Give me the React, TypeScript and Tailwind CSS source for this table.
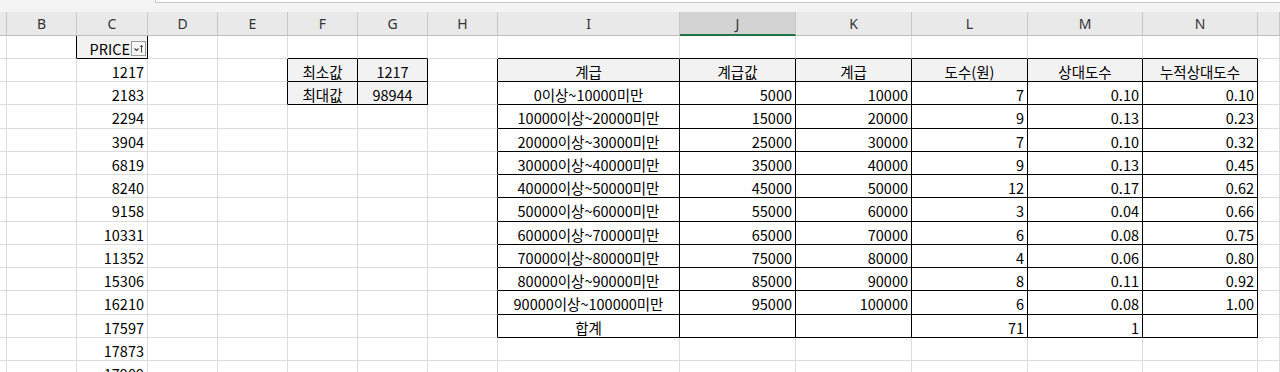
import React from 'react';

const letters = ['', 'B', 'C', 'D', 'E', 'F', 'G', 'H', 'I', 'J', 'K', 'L', 'M', 'N', ''];
const rowH = [23, 23, 23, 24, 23, 23, 23, 24, 23, 23, 23, 24, 23, 23, 23];

const priceCol: (number | string)[] = ['PRICE', 1217, 2183, 2294, 3904, 6819, 8240, 9158, 10331, 11352, 15306, 16210, 17597, 17873, 17909];

const mainTable: string[][] = [
  ['계급', '계급값', '계급', '도수(원)', '상대도수', '누적상대도수'],
  ['0이상~10000미만', '5000', '10000', '7', '0.10', '0.10'],
  ['10000이상~20000미만', '15000', '20000', '9', '0.13', '0.23'],
  ['20000이상~30000미만', '25000', '30000', '7', '0.10', '0.32'],
  ['30000이상~40000미만', '35000', '40000', '9', '0.13', '0.45'],
  ['40000이상~50000미만', '45000', '50000', '12', '0.17', '0.62'],
  ['50000이상~60000미만', '55000', '60000', '3', '0.04', '0.66'],
  ['60000이상~70000미만', '65000', '70000', '6', '0.08', '0.75'],
  ['70000이상~80000미만', '75000', '80000', '4', '0.06', '0.80'],
  ['80000이상~90000미만', '85000', '90000', '8', '0.11', '0.92'],
  ['90000이상~100000미만', '95000', '100000', '6', '0.08', '1.00'],
  ['합계', '', '', '71', '1', ''],
];

const inTable = (r: number, c: number) =>
  (r === 1 && c === 2) ||
  (r >= 2 && r <= 3 && c >= 5 && c <= 6) ||
  (r >= 2 && r <= 13 && c >= 8 && c <= 13);

type Align = 'left' | 'right' | 'center';
type CellInfo = { text: string; align: Align; fill: boolean; filter?: boolean };

function getCell(r: number, c: number): CellInfo {
  if (c === 2) {
    if (r === 1) return { text: 'PRICE', align: 'right', fill: true, filter: true };
    return { text: String(priceCol[r - 1] ?? ''), align: 'right', fill: false };
  }
  if (c === 5 && r === 2) return { text: '최소값', align: 'center', fill: true };
  if (c === 5 && r === 3) return { text: '최대값', align: 'center', fill: true };
  if (c === 6 && r === 2) return { text: '1217', align: 'center', fill: true };
  if (c === 6 && r === 3) return { text: '98944', align: 'center', fill: true };
  if (c >= 8 && c <= 13 && r >= 2 && r <= 13) {
    const row = mainTable[r - 2];
    const text = row[c - 8];
    if (r === 2) return { text, align: 'center', fill: true };
    if (c === 8) return { text, align: 'center', fill: false };
    return { text, align: 'right', fill: false };
  }
  return { text: '', align: 'left', fill: false };
}

function FilterButton() {
  return (
    <div className="w-[15px] h-[15px] border border-[#9a9a9a] bg-[#f7f7f7] flex items-center justify-center shrink-0 mt-[2px]">
      <svg width="13" height="13" viewBox="0 0 13 13">
        <path d="M2.5 6.5 L4.5 8.5 L6.5 6.5" fill="none" stroke="#444" strokeWidth="1.1" />
        <path d="M9.5 10.5 V3.5 M8.2 4.8 L9.5 3.3 L10.8 4.8" fill="none" stroke="#444" strokeWidth="1" />
      </svg>
    </div>
  );
}

export default function App() {
  const cells: React.ReactNode[] = [];

  letters.forEach((l, c) => {
    const selected = c === 9;
    cells.push(
      <div
        key={`h-${c}`}
        className={`h-[24px] flex items-center justify-center border-r border-r-[#c8c8c8] ${
          selected ? 'bg-[#d3d3d3] border-b-2 border-b-[#217346]' : 'bg-[#e9e9e9] border-b border-b-[#bdbdbd]'
        } text-[14px] text-[#333] font-['Noto_Sans',sans-serif]`}
      >
        {l}
      </div>
    );
  });

  for (let r = 1; r <= 15; r++) {
    for (let c = 0; c < 15; c++) {
      const info = getCell(r, c);
      const rb = inTable(r, c) || inTable(r, c + 1);
      const bb = inTable(r, c) || inTable(r + 1, c);
      const h = rowH[r - 1] === 24 ? 'h-[24px]' : 'h-[23px]';
      const alignCls =
        info.align === 'right'
          ? info.filter
            ? 'justify-end pr-[1px] gap-[1px]'
            : 'justify-end pr-[3px]'
          : info.align === 'center'
          ? 'justify-center'
          : 'justify-start pl-[3px]';
      cells.push(
        <div
          key={`${r}-${c}`}
          className={`${h} flex items-center overflow-hidden whitespace-nowrap border-r border-b ${
            rb ? 'border-r-black' : 'border-r-[#dcdcdc]'
          } ${bb ? 'border-b-black' : 'border-b-[#dcdcdc]'} ${info.fill ? 'bg-[#f2f2f2]' : 'bg-white'} ${alignCls}`}
        >
          {info.text && <span className="leading-none pt-[4px]">{info.text}</span>}
          {info.filter && <FilterButton />}
        </div>
      );
    }
  }

  return (
    <div className="w-[1280px] h-[372px] overflow-hidden bg-white font-['Noto_Sans_CJK_KR',sans-serif] text-[14.5px] text-black">
      <div className="h-[12px] bg-[#f3f3f3] flex items-start">
        <div className="w-[155px] shrink-0" />
        <div className="flex-1 h-[3px] bg-white border-l border-b border-[#c6c6c6]" />
      </div>
      <div className="grid grid-cols-[7px_70px_71px_70px_70px_70px_70px_70px_182px_116px_116px_116px_115px_115px_22px]">
        {cells}
      </div>
    </div>
  );
}
